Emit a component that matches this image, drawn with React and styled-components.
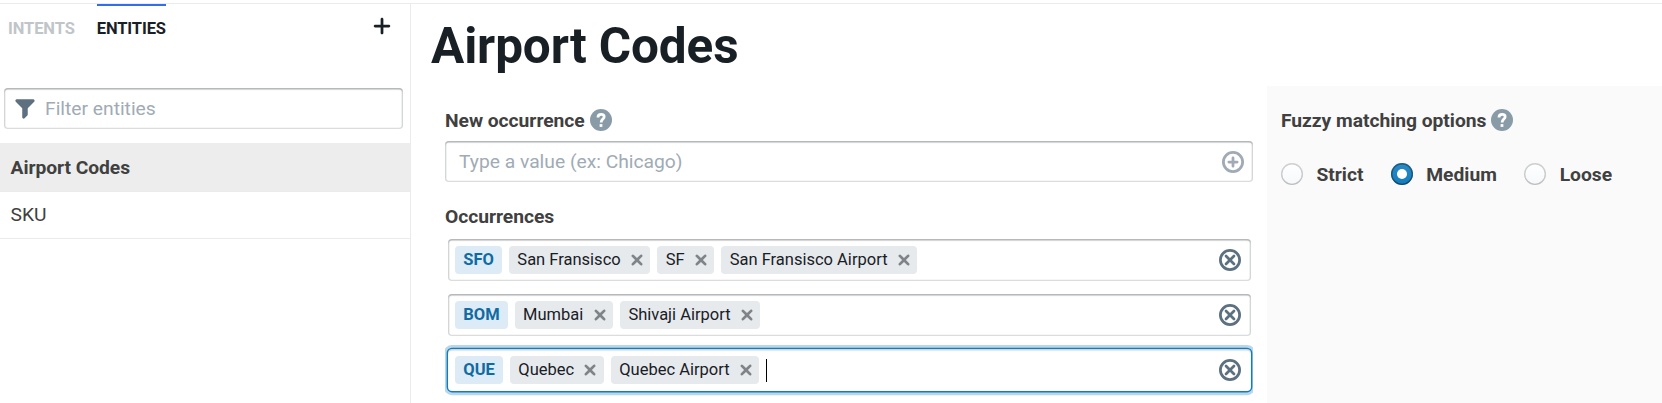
import React from "react";
import styled, { createGlobalStyle, css } from "styled-components";

const GlobalStyle = createGlobalStyle`
  * { box-sizing: border-box; }
  body {
    margin: 0;
    background: #fff;
    color: #404040;
    font-family: Roboto, "Liberation Sans", sans-serif;
    font-size: 19.25px;
    line-height: 25px;
    overflow: hidden;
  }
`;

const Page = styled.div`
  display: flex;
  height: 400px;
  margin-top: 3px;
  border-top: 1px solid #ebebeb;
`;

const Sidebar = styled.aside`
  width: 411px;
  flex: none;
  border-right: 1px solid #ebebeb;
`;

const TabBar = styled.nav`
  display: flex;
  align-items: flex-start;
  height: 84px;
  padding: 0 17px 0 8px;
  gap: 22px;
`;

const Tab = styled.a`
  border-top: 2px solid ${(p) => (p.$active ? "#2f6fed" : "transparent")};
  padding-top: 13px;
  font-size: 16.5px;
  line-height: 20px;
  font-weight: 700;
  letter-spacing: -0.1px;
  color: ${(p) => (p.$active ? "#182026" : "#bfc5c9")};
`;

const AddButton = styled.button`
  margin: 11px 0 0 auto;
  padding: 0;
  border: 0;
  background: none;
  color: #182026;
  display: flex;
`;

const insetEdge = css`
  box-shadow: inset 0 0 0 1.375px rgba(16, 22, 26, 0.15),
    inset 0 1.375px 1.375px rgba(16, 22, 26, 0.2);
`;

const InputBox = styled.label`
  display: flex;
  align-items: center;
  height: 41px;
  border-radius: 4px;
  background: #fff;
  color: #a0abb5;
  ${insetEdge}
`;

const FilterBox = styled(InputBox)`
  margin: 0 7px 14px 4px;
  padding-left: 10px;
  gap: 9px;
`;

const OccurrenceBox = styled(InputBox)`
  justify-content: space-between;
  padding: 0 9px 0 14px;
`;

const EntityRow = styled.div`
  height: ${(p) => (p.$selected ? "49px" : "47px")};
  padding: ${(p) => (p.$selected ? "12px" : "10px")} 10.5px 0;
  font-weight: ${(p) => (p.$selected ? 700 : 400)};
  letter-spacing: ${(p) => (p.$selected ? "-0.05px" : "0")};
  background: ${(p) => (p.$selected ? "#ededed" : "#fff")};
  border-bottom: 1px solid #ebebeb;
`;

const Main = styled.main`
  flex: 1;
  display: flex;
  flex-direction: column;
`;

const Title = styled.h1`
  margin: 0;
  height: 82px;
  padding: 15px 0 0 20px;
  font-size: 49.5px;
  line-height: 55px;
  font-weight: 700;
  letter-spacing: -0.12px;
  color: #182026;
`;

const Columns = styled.div`
  flex: 1;
  display: flex;
`;

const Editor = styled.section`
  width: 808px;
  margin: 0 14px 0 34px;
  padding-top: 21px;
  overflow: hidden;
`;

const FieldLabel = styled.div`
  display: flex;
  align-items: center;
  gap: 5px;
  height: 34px;
  padding-bottom: 8px;
  font-weight: 700;
  letter-spacing: -0.03px;
`;

const ListLabel = styled(FieldLabel)`
  height: 57px;
  padding: 11px 0 0;
`;

const OccurrenceList = styled.div`
  display: flex;
  flex-direction: column;
  gap: 13px;
  padding: 0 2px 0 3px;
`;

const OccurrenceRow = styled.div`
  display: flex;
  align-items: center;
  height: 42px;
  padding: 0 10px 0 7px;
  gap: 7px;
  border-radius: 4px;
  ${insetEdge}
  ${(p) =>
    p.$focused &&
    css`
      box-shadow: 0 0 0 1.375px #137cbd, 0 0 0 4.125px rgba(19, 124, 189, 0.3),
        inset 0 1.375px 1.375px rgba(16, 22, 26, 0.2);
    `}
`;

const Tag = styled.span`
  display: flex;
  align-items: center;
  height: 28px;
  padding: 0 ${(p) => (p.$code ? "8.25px" : "2.6px")} 0 8.25px;
  gap: 5.2px;
  border-radius: 4px;
  font-size: 16.5px;
  line-height: 22px;
  font-weight: ${(p) => (p.$code ? 700 : 400)};
  color: ${(p) => (p.$code ? "#106ba3" : "#182026")};
  background: ${(p) => (p.$code ? "#dcebf6" : "#e7eaed")};
`;

const Caret = styled.span`
  width: 1px;
  height: 23px;
  background: #000;
`;

const RowEnd = styled.span`
  display: flex;
  margin-left: auto;
  color: #5c7080;
`;

const Options = styled.section`
  flex: 1;
  background: #fafafa;
  padding: 21px 14px;
`;

const RadioGroup = styled.div`
  display: flex;
  gap: 27.4px;
  margin-top: 22px;
`;

const RadioOption = styled.label`
  display: flex;
  align-items: center;
  gap: 13.4px;
  height: 22px;
  font-weight: 700;
`;

const RadioDot = styled.span`
  display: grid;
  place-items: center;
  width: 22px;
  height: 22px;
  border-radius: 50%;
  background: linear-gradient(#fff, #f5f8fa);
  box-shadow: inset 0 0 0 1.375px rgba(16, 22, 26, 0.2),
    inset 0 -1.375px 0 rgba(16, 22, 26, 0.06);
  ${(p) =>
    p.$checked &&
    css`
      background: linear-gradient(#2b8bc6, #137cbd);
      box-shadow: inset 0 0 0 1.375px rgba(16, 22, 26, 0.4),
        inset 0 -1.375px 0 rgba(16, 22, 26, 0.2);
      &::after {
        content: "";
        width: 10px;
        height: 10px;
        border-radius: 50%;
        background: #fff;
      }
    `}
`;

const Glyph = styled.svg`
  display: block;
  flex: none;
  width: 22px;
  height: 22px;
  fill: currentColor;
`;

const PlusIcon = () => (
  <Glyph viewBox="0 0 16 16">
    <path d="M13 7H9V3c0-.55-.45-1-1-1s-1 .45-1 1v4H3c-.55 0-1 .45-1 1s.45 1 1 1h4v4c0 .55.45 1 1 1s1-.45 1-1V9h4c.55 0 1-.45 1-1s-.45-1-1-1z" />
  </Glyph>
);

const FunnelIcon = () => (
  <Glyph viewBox="0 0 16 16" color="#5c7080">
    <path d="M13.99.99h-12a1.003 1.003 0 00-.71 1.71l4.71 4.71V14a1.003 1.003 0 001.71.71l2-2c.18-.18.29-.43.29-.71V7.41L14.7 2.7a1.003 1.003 0 00-.71-1.71z" />
  </Glyph>
);

const CrossIcon = () => (
  <Glyph viewBox="0 0 16 16" color="#7f8488">
    <path d="M9.41 8l2.29-2.29c.19-.18.3-.43.3-.71a1.003 1.003 0 00-1.71-.71L8 6.59l-2.29-2.3a1.003 1.003 0 00-1.42 1.42L6.59 8 4.3 10.29c-.19.18-.3.43-.3.71a1.003 1.003 0 001.71.71L8 9.41l2.29 2.29c.18.19.43.3.71.3a1.003 1.003 0 00.71-1.71L9.41 8z" />
  </Glyph>
);

const HelpIcon = () => (
  <Glyph viewBox="0 0 16 16" color="#8a9ba8">
    <circle cx="8" cy="8" r="8" />
    <path
      d="M5.8 6.1C5.8 4.6 6.7 3.9 8.1 3.9c1.4 0 2.2.7 2.2 1.7 0 1.8-2.2 1.8-2.2 4.2"
      fill="none"
      stroke="#fff"
      strokeWidth="2"
    />
    <path d="M7 11h2v2H7z" fill="#fff" />
  </Glyph>
);

const RingIcon = ({ d, color }) => (
  <Glyph viewBox="0 0 16 16" color={color}>
    <circle cx="8" cy="8" r="7" fill="none" stroke="currentColor" strokeWidth="2" />
    <path d={d} fill="none" stroke="currentColor" strokeWidth="2" strokeLinecap="round" />
  </Glyph>
);

const occurrences = [
  { code: "SFO", synonyms: ["San Fransisco", "SF", "San Fransisco Airport"] },
  { code: "BOM", synonyms: ["Mumbai", "Shivaji Airport"] },
  { code: "QUE", synonyms: ["Quebec", "Quebec Airport"], focused: true },
];

export default function App() {
  return (
    <>
      <GlobalStyle />
      <Page>
        <Sidebar>
          <TabBar>
            <Tab>INTENTS</Tab>
            <Tab $active>ENTITIES</Tab>
            <AddButton aria-label="Add entity">
              <PlusIcon />
            </AddButton>
          </TabBar>
          <FilterBox>
            <FunnelIcon />
            Filter entities
          </FilterBox>
          <EntityRow $selected>Airport Codes</EntityRow>
          <EntityRow>SKU</EntityRow>
        </Sidebar>
        <Main>
          <Title>Airport Codes</Title>
          <Columns>
            <Editor>
              <FieldLabel>
                New occurrence <HelpIcon />
              </FieldLabel>
              <OccurrenceBox>
                Type a value (ex: Chicago)
                <RingIcon color="#a0abb5" d="M8 5v6M5 8h6" />
              </OccurrenceBox>
              <ListLabel>Occurrences</ListLabel>
              <OccurrenceList>
                {occurrences.map(({ code, synonyms, focused }) => (
                  <OccurrenceRow key={code} $focused={focused}>
                    <Tag $code>{code}</Tag>
                    {synonyms.map((name) => (
                      <Tag key={name}>
                        {name}
                        <CrossIcon />
                      </Tag>
                    ))}
                    {focused && <Caret />}
                    <RowEnd>
                      <RingIcon color="#5c7080" d="M5.1 5.1l5.8 5.8M10.9 5.1l-5.8 5.8" />
                    </RowEnd>
                  </OccurrenceRow>
                ))}
              </OccurrenceList>
            </Editor>
            <Options>
              <FieldLabel>
                Fuzzy matching options <HelpIcon />
              </FieldLabel>
              <RadioGroup>
                {["Strict", "Medium", "Loose"].map((name) => (
                  <RadioOption key={name}>
                    <RadioDot $checked={name === "Medium"} />
                    {name}
                  </RadioOption>
                ))}
              </RadioGroup>
            </Options>
          </Columns>
        </Main>
      </Page>
    </>
  );
}
